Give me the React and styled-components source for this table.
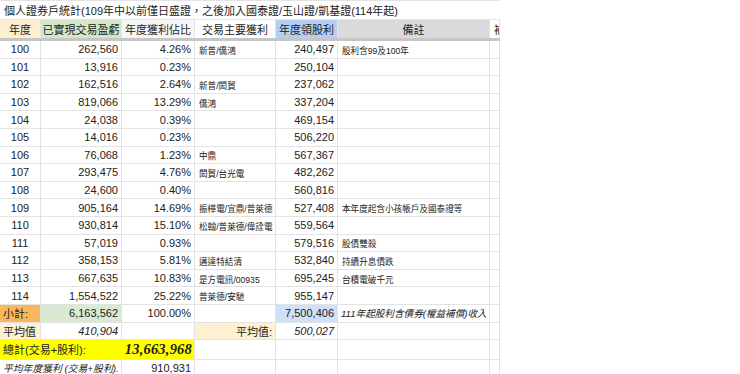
import React from 'react'
import styled, { createGlobalStyle } from 'styled-components'

const GlobalStyle = createGlobalStyle`
  html, body { margin: 0; padding: 0; background: #ffffff; }
  body { font-family: "Liberation Sans", "Noto Sans CJK TC", sans-serif; color: #222; }
  * { box-sizing: border-box; }
`

const COLS = '41px 81px 73px 81px 62px 152px 10px'

const rows = [
    ['100', '262,560', '4.26%', '新普/僑鴻', '240,497', '股利含99及100年'],
    ['101', '13,916', '0.23%', '', '250,104', ''],
    ['102', '162,516', '2.64%', '新普/閎貿', '237,062', ''],
    ['103', '819,066', '13.29%', '僑鴻', '337,204', ''],
    ['104', '24,038', '0.39%', '', '469,154', ''],
    ['105', '14,016', '0.23%', '', '506,220', ''],
    ['106', '76,068', '1.23%', '中鼎', '567,367', ''],
    ['107', '293,475', '4.76%', '閎貿/台光電', '482,262', ''],
    ['108', '24,600', '0.40%', '', '560,816', ''],
    ['109', '905,164', '14.69%', '振樺電/宜鼎/普萊德', '527,408', '本年度起含小孩帳戶及國泰證等'],
    ['110', '930,814', '15.10%', '松翰/普萊德/偉詮電', '559,564', ''],
    ['111', '57,019', '0.93%', '', '579,516', '股債雙殺'],
    ['112', '358,153', '5.81%', '邁達特結清', '532,840', '持續升息債跌'],
    ['113', '667,635', '10.83%', '是方電訊/00935', '695,245', '台積電破千元'],
    ['114', '1,554,522', '25.22%', '普萊德/安馳', '955,147', ''],
]

export default function App() {
    return (
        <>
            <GlobalStyle />
            <Page>
                <Sheet>
                    <TitleRow>
                        <Title>個人證券戶統計(109年中以前僅日盛證，之後加入國泰證/玉山證/凱基證(114年起)</Title>
                    </TitleRow>
                    <HeaderRow>
                        <Head bg="#fcefcf">年度</Head>
                        <Head bg="#d3e8cb">已實現交易盈虧</Head>
                        <Head bg="#f7f7f7">年度獲利佔比</Head>
                        <Head>交易主要獲利</Head>
                        <Head bg="#b4cff3">年度領股利</Head>
                        <Head bg="#dadada">備註</Head>
                        <Head clip>補</Head>
                    </HeaderRow>

                    {rows.map((r) => (
                        <Row key={r[0]}>
                            <Cell align="center">{r[0]}</Cell>
                            <Cell align="right">{r[1]}</Cell>
                            <Cell align="right">{r[2]}</Cell>
                            <Note>{r[3]}</Note>
                            <Cell align="right">{r[4]}</Cell>
                            <Note>{r[5]}</Note>
                            <Cell />
                        </Row>
                    ))}

                    <Row>
                        <Cell bg="#f7b75a">小計:</Cell>
                        <Cell align="right" bg="#d9ead3">6,163,562</Cell>
                        <Cell align="right">100.00%</Cell>
                        <Cell />
                        <Cell align="right" bg="#cfe0f8">7,500,406</Cell>
                        <Cell italic size="9.6px">111年起股利含債券(權益補償)收入</Cell>
                        <Cell />
                    </Row>
                    <Row>
                        <Cell bg="#fdf1d2">平均值</Cell>
                        <Cell align="right" italic>410,904</Cell>
                        <Cell />
                        <Cell align="right" bg="#fdf1d2">平均值:</Cell>
                        <Cell align="right" italic>500,027</Cell>
                        <Cell />
                        <Cell />
                    </Row>
                    <Row tall>
                        <Cell span={2} bg="#ffff00">總計(交易+股利):</Cell>
                        <Total>13,663,968</Total>
                        <Cell />
                        <Cell />
                        <Cell />
                        <Cell />
                    </Row>
                    <Row>
                        <Cell span={2} italic size="9.8px">平均年度獲利 (交易+股利).</Cell>
                        <Cell align="right">910,931</Cell>
                        <Cell />
                        <Cell />
                        <Cell />
                        <Cell />
                    </Row>
                </Sheet>
            </Page>
        </>
    )
}

const Page = styled.div`
    width: 740px;
    height: 374px;
    overflow: hidden;
    background: #ffffff;
`

const Sheet = styled.div`
    width: 500px;
    display: flex;
    flex-direction: column;
    border-top: 1px solid #e3e3e3;
`

const TitleRow = styled.div`
    height: 19px;
    display: flex;
    align-items: center;
    border-bottom: 1px solid #e3e3e3;
`

const Title = styled.div`
    padding-left: 4px;
    font-size: 11px;
    white-space: nowrap;
`

const Row = styled.div`
    display: grid;
    grid-template-columns: ${COLS};
    height: ${(p) => (p.tall ? '19.5px' : '17.6px')};
`

const HeaderRow = styled(Row)`
    height: 21px;
    border-bottom: 3px solid #c6c6c6;
`

const Cell = styled.div`
    display: flex;
    align-items: center;
    justify-content: ${(p) => (p.align === 'right' ? 'flex-end' : p.align === 'center' ? 'center' : 'flex-start')};
    grid-column: span ${(p) => p.span || 1};
    padding: 0 3px;
    background: ${(p) => p.bg || 'transparent'};
    border-right: 1px solid #e3e3e3;
    border-bottom: 1px solid #e3e3e3;
    font-size: ${(p) => p.size || '11px'};
    font-style: ${(p) => (p.italic ? 'italic' : 'normal')};
    white-space: nowrap;
    overflow: hidden;
`

const Head = styled(Cell)`
    justify-content: ${(p) => (p.clip ? 'flex-start' : 'center')};
    padding: ${(p) => (p.clip ? '0 0 0 4px' : '0')};
    border-bottom: none;
    font-size: 11px;
`

const Note = styled(Cell)`
    font-size: 8.6px;
    padding-left: 4px;
    padding-top: 1px;
`

const Total = styled(Cell)`
    justify-content: flex-end;
    padding: 0 2px 0 0;
    background: #ffff00;
    font-family: "Liberation Serif", "DejaVu Serif", serif;
    font-weight: bold;
    font-style: italic;
    font-size: 14.5px;
    letter-spacing: 0.2px;
`
